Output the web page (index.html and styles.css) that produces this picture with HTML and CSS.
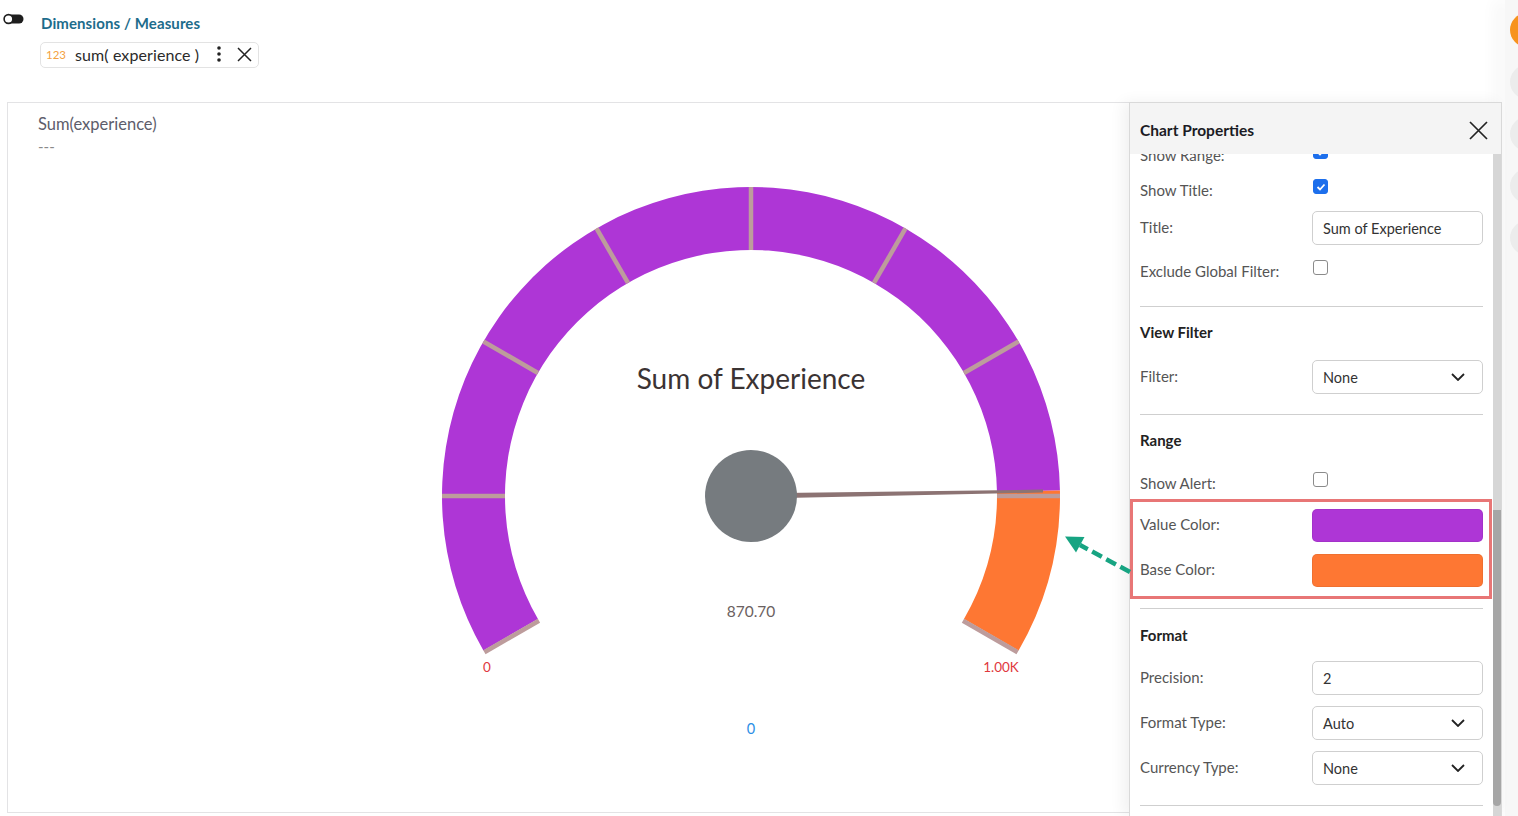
FILE: index.html
```html
<!DOCTYPE html>
<html>
<head>
<meta charset="utf-8">
<link rel="stylesheet" href="styles.css">
</head>
<body>
<div class="page">
  <div class="main">
    <div class="topbar">
      <div class="dm-row">
        <svg class="toggle" width="22" height="12" viewBox="0 0 22 12"><rect x="5" y="1.5" width="16.5" height="9" rx="4.5" fill="#1e1e1e"/><circle cx="6.5" cy="6" r="4.4" fill="#fff" stroke="#1e1e1e" stroke-width="1.6"/></svg>
        <span class="dm-label">Dimensions / Measures</span>
      </div>
      <div class="chip">
        <span class="chip-type">123</span>
        <span class="chip-text">sum( experience )</span>
        <svg class="chip-kebab" width="6" height="18" viewBox="0 0 6 18"><circle cx="3" cy="3" r="1.8" fill="#222"/><circle cx="3" cy="9" r="1.8" fill="#222"/><circle cx="3" cy="15" r="1.8" fill="#222"/></svg>
        <svg class="chip-x" width="15" height="15" viewBox="0 0 15 15"><path d="M1 1 L14 14 M14 1 L1 14" stroke="#222" stroke-width="1.5" fill="none"/></svg>
      </div>
    </div>

    <div class="card">
      <div class="card-head">
        <div class="card-title">Sum(experience)</div>
        <div class="card-sub">---</div>
      </div>
      <svg class="gauge" width="1493" height="652" viewBox="8 160 1493 652">
        <path d="M 483.4 650.5 A 309 309 0 1 1 1059.95 490.45 L 996.96 491.58 A 246 246 0 1 0 537.96 619 Z" fill="#ae36d6"/>
        <path d="M 1059.95 490.45 A 309 309 0 0 1 1018.6 650.5 L 963.96 619 A 246 246 0 0 0 996.96 491.58 Z" fill="#fe7733"/>
        <g stroke="#bd9c9c" stroke-width="4.5">
          <line x1="505" y1="496" x2="442" y2="496"/>
          <line x1="537.96" y1="373" x2="483.4" y2="341.5"/>
          <line x1="628" y1="282.96" x2="596.5" y2="228.4"/>
          <line x1="751" y1="250" x2="751" y2="187"/>
          <line x1="874" y1="282.96" x2="905.5" y2="228.4"/>
          <line x1="963.96" y1="373" x2="1018.6" y2="341.5"/>
          <line x1="997" y1="496" x2="1060" y2="496"/>
          <line x1="538.96" y1="620.7" x2="484.4" y2="652.2"/>
          <line x1="962.96" y1="620.7" x2="1017.6" y2="652.2"/>
        </g>
        <polygon points="751,493.3 751,498.7 1043,492.6 1043,489.6" fill="#8c7373"/>
        <circle cx="751" cy="496" r="46" fill="#767b7f"/>
        <text class="g-title" x="751" y="389" text-anchor="middle">Sum of Experience</text>
        <text class="g-value" x="751" y="617" text-anchor="middle">870.70</text>
        <text class="g-min" x="487" y="672" text-anchor="middle">0</text>
        <text class="g-min" x="1001" y="672" text-anchor="middle">1.00K</text>
        <text class="g-zero" x="751" y="734" text-anchor="middle">0</text>
      </svg>
    </div>

    <aside class="panel">
      <div class="panel-head">
        <span class="panel-title">Chart Properties</span>
        <svg class="panel-close" width="19" height="19" viewBox="0 0 19 19"><path d="M1 1 L18 18 M18 1 L1 18" stroke="#222" stroke-width="1.7" fill="none"/></svg>
      </div>
      <div class="panel-body">
        <div class="panel-content">
          <div class="row row-cb r-range">
            <span class="lbl">Show Range:</span>
            <span class="cb checked"><svg width="10" height="8" viewBox="0 0 10 8"><path d="M1.5 4 L4 6.5 L8.5 1.5" stroke="#fff" stroke-width="1.8" fill="none"/></svg></span>
          </div>
          <div class="row row-cb r-title">
            <span class="lbl">Show Title:</span>
            <span class="cb checked"><svg width="10" height="8" viewBox="0 0 10 8"><path d="M1.5 4 L4 6.5 L8.5 1.5" stroke="#fff" stroke-width="1.8" fill="none"/></svg></span>
          </div>
          <div class="row row-in r-titlein">
            <span class="lbl">Title:</span>
            <span class="inp">Sum of Experience</span>
          </div>
          <div class="row row-cb r-excl">
            <span class="lbl">Exclude Global Filter:</span>
            <span class="cb"></span>
          </div>
          <div class="divider d1"></div>
          <div class="heading h-vf">View Filter</div>
          <div class="row row-in r-filter">
            <span class="lbl">Filter:</span>
            <span class="inp sel">None<svg class="chev" width="14" height="8" viewBox="0 0 14 8"><path d="M1 1 L7 7 L13 1" stroke="#222" stroke-width="1.8" fill="none"/></svg></span>
          </div>
          <div class="divider d2"></div>
          <div class="heading h-range">Range</div>
          <div class="row row-cb r-alert">
            <span class="lbl">Show Alert:</span>
            <span class="cb"></span>
          </div>
          <div class="highlight">
            <div class="row row-in r-vc">
              <span class="lbl">Value Color:</span>
              <span class="swatch sw-purple"></span>
            </div>
            <div class="row row-in r-bc">
              <span class="lbl">Base Color:</span>
              <span class="swatch sw-orange"></span>
            </div>
          </div>
          <div class="divider d3"></div>
          <div class="heading h-format">Format</div>
          <div class="row row-in r-prec">
            <span class="lbl">Precision:</span>
            <span class="inp">2</span>
          </div>
          <div class="row row-in r-ftype">
            <span class="lbl">Format Type:</span>
            <span class="inp sel">Auto<svg class="chev" width="14" height="8" viewBox="0 0 14 8"><path d="M1 1 L7 7 L13 1" stroke="#222" stroke-width="1.8" fill="none"/></svg></span>
          </div>
          <div class="row row-in r-ctype">
            <span class="lbl">Currency Type:</span>
            <span class="inp sel">None<svg class="chev" width="14" height="8" viewBox="0 0 14 8"><path d="M1 1 L7 7 L13 1" stroke="#222" stroke-width="1.8" fill="none"/></svg></span>
          </div>
          <div class="divider d4"></div>
        </div>
        <div class="scroll-track"><div class="scroll-thumb"></div></div>
      </div>
    </aside>

    <svg class="annot" width="80" height="50" viewBox="1060 530 80 50">
      <line x1="1130" y1="572" x2="1080" y2="545" stroke="#17a482" stroke-width="4.5" stroke-dasharray="11 5"/>
      <polygon points="1065,536.5 1084.5,537 1076,552.5" fill="#17a482"/>
    </svg>
  </div>
  <div class="rail">
    <span class="dot dot-orange"></span>
    <span class="dot"></span>
    <span class="dot"></span>
    <span class="dot"></span>
    <span class="dot"></span>
  </div>
</div>
</body>
</html>
```

FILE: styles.css
```css
* { box-sizing: border-box; }
html, body { margin: 0; padding: 0; background: #fff; }
body { font-family: "Lato", "Open Sans", sans-serif; color: #333; overflow: hidden; }

.page { display: flex; width: 1518px; height: 816px; }
.main { position: relative; width: 1505px; height: 816px; flex: 0 0 1505px; }

/* top bar */
.topbar { height: 102px; }
.dm-row { display: flex; align-items: flex-start; padding-top: 13px; padding-left: 2px; }
.toggle { display: block; margin-right: 17px; }
.dm-label { margin-top: 0; font-size: 15px; line-height: 20px; font-weight: 700; color: #1d6c8b; letter-spacing: 0.1px; }
.chip { display: flex; align-items: center; margin-top: 9px; margin-left: 40px; width: 219px; height: 26px; border: 1px solid #e3e3e3; border-radius: 5px; padding-left: 5px; padding-bottom: 2px; }
.chip-type { font-size: 11.5px; color: #f4a141; margin-right: 9px; }
.chip-text { font-size: 16px; color: #2a2a2a; letter-spacing: 0.1px; }
.chip-kebab { margin-left: 17px; display: block; }
.chip-x { margin-left: 15px; display: block; }

/* chart card */
.card { margin-left: 7px; width: 1495px; height: 711px; border: 1px solid #e3e3e5; display: flex; flex-direction: column; }
.card-head { height: 57px; padding-left: 30px; padding-top: 11px; }
.card-title { font-size: 16.5px; line-height: 20px; color: #5d5d6b; }
.card-sub { font-size: 15px; line-height: 18px; color: #8a8a8a; margin-top: 3px; }
.gauge { display: block; flex: 0 0 auto; }
.g-title { font-family: "Lato", sans-serif; font-size: 28px; fill: #3b3333; }
.g-value { font-family: "Lato", sans-serif; font-size: 15.5px; fill: #6b6161; }
.g-min { font-family: "Lato", sans-serif; font-size: 13.5px; fill: #e0383d; }
.g-zero { font-family: "Lato", sans-serif; font-size: 14.5px; fill: #2d8fe6; }

/* panel */
.panel { position: absolute; left: 1129px; top: 102px; width: 373px; bottom: 0; background: #fff; border: 1px solid #d9d9d9; border-bottom: none; box-shadow: -6px 0 14px rgba(0,0,0,0.06); display: flex; flex-direction: column; z-index: 2; }
.panel-head { flex: 0 0 51px; height: 51px; background: #f4f4f4; display: flex; align-items: center; justify-content: space-between; padding-left: 10px; padding-right: 13px; position: relative; z-index: 1; }
.panel-title { font-size: 15.5px; font-weight: 700; color: #1b1b24; margin-top: 2px; }
.panel-close { display: block; margin-top: 3px; }
.panel-body { flex: 1 1 auto; display: flex; overflow: hidden; padding-left: 10px; }
.panel-content { flex: 0 0 343px; width: 343px; margin-right: 10px; margin-top: -10px; font-size: 15px; }
.scroll-track { flex: 0 0 8px; width: 8px; background: #d6d6d6; }
.scroll-thumb { margin-top: 356px; height: 296px; background: #a6a6a6; border-radius: 0 0 4px 4px; }

.row { display: flex; align-items: flex-start; }
.lbl { flex: 0 0 172px; width: 172px; line-height: 20px; color: #555; font-size: 15px; }
.row-cb .lbl { padding-top: 1px; }
.row-in .lbl { padding-top: 6px; }
.cb { width: 15px; height: 15px; border: 1px solid #8b8b8b; border-radius: 3px; margin-left: 1px; display: flex; align-items: center; justify-content: center; background: #fff; }
.cb.checked { background: #1d6fec; border-color: #1d6fec; }
.cb svg { display: block; }
.inp { flex: 0 0 171px; width: 171px; height: 34px; border: 1px solid #cfcfcf; border-radius: 5px; padding-left: 10px; padding-right: 17px; display: flex; align-items: center; justify-content: space-between; font-size: 14.5px; color: #333; }
.chev { display: block; }
.swatch { flex: 0 0 171px; width: 171px; height: 33px; border-radius: 5px; border: 1px solid rgba(0,0,0,0.06); }
.sw-purple { background: #ae36d6; }
.sw-orange { background: #fe7733; }
.divider { height: 1px; background: #cfcfcf; }
.heading { font-size: 15px; font-weight: 700; line-height: 20px; color: #222; }

.r-range { height: 20px; }
.r-title { margin-top: 15px; height: 20px; }
.r-titlein { margin-top: 12px; }
.r-excl { margin-top: 15px; height: 20px; }
.d1 { margin-top: 26px; }
.h-vf { margin-top: 15px; }
.r-filter { margin-top: 18px; }
.d2 { margin-top: 20px; }
.h-range { margin-top: 15px; }
.r-alert { margin-top: 22px; height: 20px; }
.highlight { margin-top: 7px; margin-left: -10px; width: 362px; height: 100px; border: 3px solid #e87676; padding: 7px 6px 0 7px; }
.r-bc { margin-top: 12px; }
.highlight .lbl { padding-top: 5px; }
.d3 { margin-top: 9px; }
.h-format { margin-top: 16px; }
.r-prec { margin-top: 16px; }
.r-ftype { margin-top: 11px; }
.r-ctype { margin-top: 11px; }
.d4 { margin-top: 20px; }

/* annotation arrow */
.annot { position: absolute; left: 1060px; top: 530px; z-index: 3; overflow: visible; }

/* right rail */
.rail { flex: 0 0 13px; width: 13px; height: 816px; background: #f7f7f7; overflow: hidden; padding-top: 13px; padding-left: 5px; box-shadow: -10px 0 16px rgba(0,0,0,0.04); position: relative; z-index: 1; }
.dot { display: block; width: 34px; height: 34px; border-radius: 50%; background: #ececec; margin-bottom: 18px; }
.dot-orange { background: #f7931e; }
```
